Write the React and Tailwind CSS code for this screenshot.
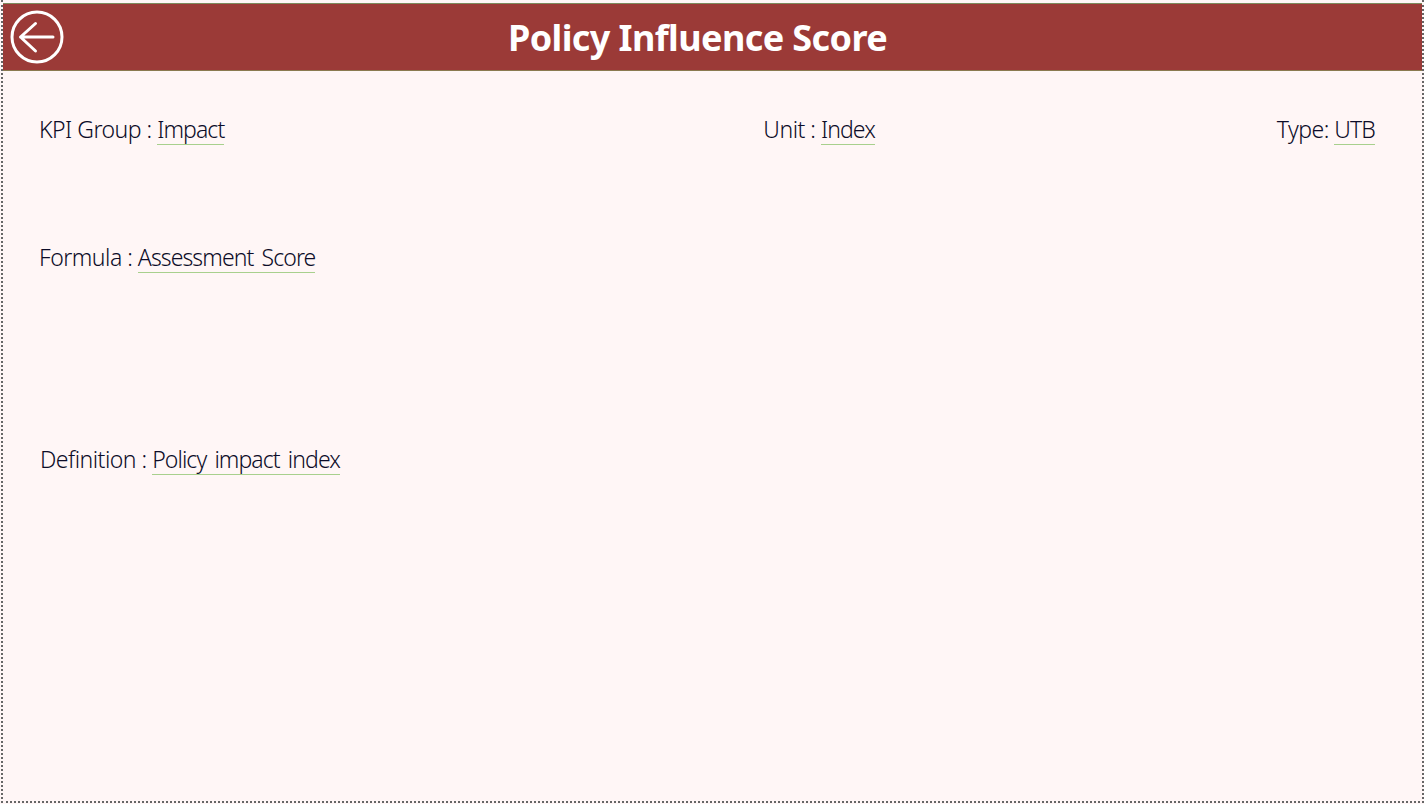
import React from "react";

// One label with its underlined value
function Field({ label, value }) {
  return (
    <div className="flex whitespace-pre text-[23px] leading-[30px] font-light text-[#0c0c28]">
      <span className="tracking-[-0.5px]">{label} </span>
      <span className="border-b border-[#a8d08d] h-[31px] tracking-[-0.9px] [word-spacing:3px]">{value}</span>
    </div>
  );
}

export default function App() {
  return (
    <div className="w-[1424px] h-[804px] pl-px pb-px bg-[#fff6f6] font-['Noto_Sans','Open_Sans',sans-serif]">
      <div className="h-full pt-[3px] border-x-2 border-b-2 border-dotted border-[#666666] overflow-hidden">
        {/* Header */}
        <div className="h-[68px] bg-[#9b3a37] border-t border-b border-t-[#7d8a5c] border-b-[#8a7a50] flex items-center relative">
          <svg className="absolute left-[7px] top-[6px]" width="54" height="54" viewBox="0 0 54 54" fill="none" stroke="white" strokeWidth="3" strokeLinecap="round" strokeLinejoin="round">
            <circle cx="27" cy="27" r="25" />
            <path d="M43 27H10.5M25.5 13.5L10.5 27L25.5 41" />
          </svg>
          <h1 className="w-full text-center text-[36px] leading-none font-bold text-white tracking-[-0.6px] pr-[30px] pt-[2px]">Policy Influence Score</h1>
        </div>

        {/* KPI details */}
        <div className="flex pl-[36px] pr-[47px] pt-[43px]">
          <Field label="KPI Group :" value="Impact" />
          <div className="ml-[539px]">
            <Field label="Unit :" value="Index" />
          </div>
          <div className="ml-auto">
            <Field label="Type:" value="UTB" />
          </div>
        </div>
        <div className="pl-[36px] pt-[97px]">
          <Field label="Formula :" value="Assessment Score" />
        </div>
        <div className="pl-[37px] pt-[171px]">
          <Field label="Definition :" value="Policy impact index" />
        </div>
      </div>
    </div>
  );
}
